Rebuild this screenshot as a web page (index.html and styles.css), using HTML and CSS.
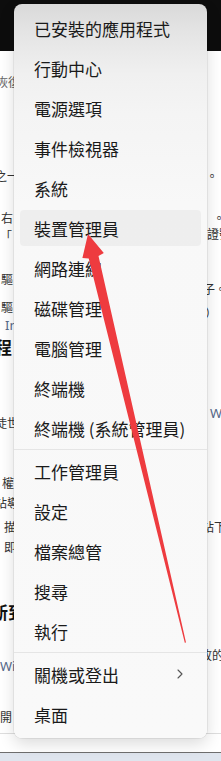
FILE: index.html
```html
<!DOCTYPE html>
<html lang="zh-Hant">
<head>
<meta charset="utf-8">
<title>Win+X</title>
<link rel="stylesheet" href="styles.css">
</head>
<body>
<div class="screen">
  <header class="topbar"></header>
  <main class="page">
    <div class="col left">
      <p class="ln muted la">恢復</p>
      <p class="ln lb">之一</p>
      <p class="ln lc">右</p>
      <p class="ln ld">「</p>
      <p class="ln le">驅</p>
      <p class="ln lg">驅</p>
      <p class="ln link li">In</p>
      <p class="h lj">程</p>
      <p class="ln ll">徒世</p>
      <p class="ln lm">權</p>
      <p class="ln ln2">站導</p>
      <p class="ln lo">描</p>
      <p class="ln lp">即</p>
      <p class="h lq">新到</p>
      <p class="ln link ls">Wi</p>
      <p class="ln lt">開</p>
    </div>
    <div class="col right">
      <p class="ln ra">。</p>
      <p class="ln rb">。</p>
      <p class="ln rc">證號</p>
      <p class="ln rd">子。</p>
      <p class="ln re">）</p>
      <p class="ln link rf">W</p>
      <p class="ln rg">站下</p>
      <p class="ln rh">故的</p>
    </div>
  </main>
  <footer class="foot"></footer>
  <div class="taskbar"></div>

  <ul class="menu">
    <li class="item">已安裝的應用程式</li>
    <li class="item">行動中心</li>
    <li class="item">電源選項</li>
    <li class="item">事件檢視器</li>
    <li class="item">系統</li>
    <li class="item hover">裝置管理員</li>
    <li class="item">網路連線</li>
    <li class="item">磁碟管理</li>
    <li class="item">電腦管理</li>
    <li class="item">終端機</li>
    <li class="item">終端機 (系統管理員)</li>
    <li class="sep"></li>
    <li class="item">工作管理員</li>
    <li class="item">設定</li>
    <li class="item">檔案總管</li>
    <li class="item">搜尋</li>
    <li class="item">執行</li>
    <li class="sep"></li>
    <li class="item">關機或登出<svg class="chev" width="6" height="10" viewBox="0 0 6 10"><path d="M1 1 L5 5 L1 9" fill="none" stroke="#555" stroke-width="1.1" stroke-linecap="round" stroke-linejoin="round"/></svg></li>
    <li class="item">桌面</li>
  </ul>

  <svg class="arrow" width="221" height="761" viewBox="0 0 221 761">
    <polygon points="88,234 103.8,252.9 98.5,256.1 186,642.6 184.8,642.8 88.7,258.5 82.4,258" fill="#ee3b3f"/>
  </svg>
</div>
</body>
</html>
```

FILE: styles.css
```css
* { box-sizing: border-box; margin: 0; padding: 0; }
html, body { width: 221px; height: 761px; overflow: hidden; }
body {
  font-family: "Noto Sans CJK TC", "Noto Sans", sans-serif;
  background: #fff;
  color: #333;
}
.screen {
  position: relative;
  width: 221px;
  height: 761px;
  display: flex;
  flex-direction: column;
  overflow: hidden;
}
.topbar { flex: none; height: 51px; background: #0d0d0d; }
.page {
  flex: none;
  height: 682px;
  display: flex;
  justify-content: space-between;
  overflow: hidden;
}
.col { display: flex; flex-direction: column; white-space: nowrap; }
.left { width: 60px; }
.right { width: 25px; }
.ln { font-size: 12px; line-height: 16px; height: 16px; }
.h { font-size: 17px; font-weight: 700; line-height: 22px; height: 22px; color: #111; }
.muted { color: #666; }
.link { color: #56698a; font-family: "Noto Sans", sans-serif; font-size: 13px; }

.la { margin-top: 23px; margin-left: -4px; }
.lb { margin-top: 78px; margin-left: -5px; }
.lc { margin-top: 26px; margin-left: 1px; }
.ld { margin-top: 2px; margin-left: 0; }
.le { margin-top: 27px; margin-left: 1px; }
.lg { margin-top: 12px; margin-left: 1px; }
.li { margin-top: 2px; margin-left: 5px; }
.lj { margin-top: 3px; margin-left: -5px; }
.ll { margin-top: 57px; margin-left: -5px; }
.lm { margin-top: 44px; margin-left: 2px; }
.ln2 { margin-top: 4px; margin-left: -5px; }
.lo { margin-top: 8px; margin-left: 4px; }
.lp { margin-top: 4px; margin-left: 4px; }
.lq { margin-top: 46px; margin-left: -9px; }
.ls { margin-top: 35px; margin-left: 0; }
.lt { margin-top: 35px; margin-left: 0; }

.ra { margin-top: 117px; margin-left: 10px; }
.rb { margin-top: 26px; margin-left: 17px; }
.rc { margin-top: 0; margin-left: 11px; }
.rd { margin-top: 39px; margin-left: 7px; }
.re { margin-top: 8px; margin-left: 9px; }
.rf { margin-top: 84px; margin-left: 14px; }
.rg { margin-top: 98px; margin-left: 6px; }
.rh { margin-top: 112px; margin-left: 4px; }

.foot { flex: none; height: 19px; border-top: 1px solid #dedede; background: #fff; }
.taskbar { flex: none; height: 9px; border-top: 1px solid #6e6e6e; background: #dfe5ee; }

.menu {
  position: absolute;
  top: 4px;
  left: 14px;
  width: 193px;
  padding: 4px 0;
  list-style: none;
  display: flex;
  flex-direction: column;
  border-radius: 8px;
  background: linear-gradient(180deg, #d9d9d9 0, #e3e3e3 25px, #eaeaea 48px, #f0f0f0 70px, #f4f4f4 110px, #f8f8f8 200px, #f9f9f9 100%);
  box-shadow: 0 0 0 1px rgba(0, 0, 0, 0.06), 0 6px 16px rgba(0, 0, 0, 0.14);
}
.item {
  flex: none;
  height: 36px;
  margin: 2px 6px;
  padding-left: 14px;
  display: flex;
  align-items: center;
  border-radius: 4px;
  font-size: 17px;
  color: #1a1a1a;
  white-space: nowrap;
}
.item.hover { background: rgba(0, 0, 0, 0.04); }
.sep { flex: none; height: 1px; margin: 1px 0; background: #e5e5e5; }
.chev { margin-left: auto; margin-right: 18px; }

.arrow { position: absolute; top: 0; left: 0; pointer-events: none; }
```
